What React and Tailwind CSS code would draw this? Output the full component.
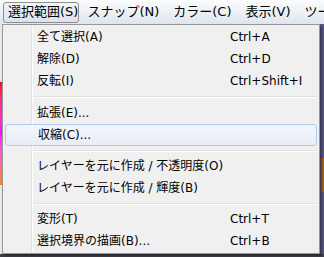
import React from 'react';

const font = { fontFamily: '"DejaVu Sans", "Noto Sans CJK JP", sans-serif' };

const menuBar = ['選択範囲(S)', 'スナップ(N)', 'カラー(C)', '表示(V)', 'ツール(T)'];

const items = [
  { label: '全て選択(A)', key: 'Ctrl+A' },
  { label: '解除(D)', key: 'Ctrl+D' },
  { label: '反転(I)', key: 'Ctrl+Shift+I' },
  { sep: 'h-[10px]' },
  { label: '拡張(E)...' },
  { label: '収縮(C)...', hover: true },
  { sep: 'h-[9px]' },
  { label: 'レイヤーを元に作成 / 不透明度(O)' },
  { label: 'レイヤーを元に作成 / 輝度(B)' },
  { sep: 'h-[9px]' },
  { label: '変形(T)', key: 'Ctrl+T' },
  { label: '選択境界の描画(B)...', key: 'Ctrl+B' },
];

export default function App() {
  return (
    <div className="relative w-[324px] h-[257px] overflow-hidden bg-[#55557f]" style={font}>
      {/* menu bar */}
      <div className="h-[24px] flex items-center pl-[3px] bg-gradient-to-b from-[#fbfcfd] to-[#dfe5ee] text-[13px] text-black">
        {menuBar.map((m, i) => (
          <div
            key={m}
            className={`h-[21px] flex items-center whitespace-nowrap ${
              i === 0
                ? 'w-[79px] pl-[4px] rounded-[3px] border border-[#8d8e90] bg-gradient-to-b from-[#f4f6f9] to-[#dde2ea]'
                : 'px-[6px] ml-[2px]'
            }`}
          >
            {m}
          </div>
        ))}
      </div>

      {/* background strips */}
      <div className="absolute left-0 top-[24px] w-[2px] h-[233px] bg-[#e8e8e8]" />
      <div className="absolute left-0 top-[82px] w-[2px] h-[103px] bg-gradient-to-b from-[#ff0000] via-[#ff00ff] to-[#ff8000]" />
      <div className="absolute left-0 top-[254px] w-[324px] h-[3px] bg-[#3f3f4a]" />
      <div className="absolute right-0 top-[158px] w-[3px] h-[34px] bg-[#b05a18]" />

      {/* dropdown */}
      <div className="absolute left-[2px] top-[24px] w-[318px] h-[230px] border border-[#979797] bg-[#f0f0f0] px-[2px] pt-[1px] pb-[1px] text-[12px] text-black shadow-[2px_2px_2px_rgba(0,0,0,0.35)]">
        <div className="relative flex flex-col">
          <div className="absolute left-[26px] top-0 bottom-0 w-[2px] border-l border-[#e2e3e3] bg-white" />
          {items.map((it, i) =>
            it.sep ? (
              <div key={i} className={`relative ${it.sep} flex items-center pl-[28px]`}>
                <div className="w-full h-[2px] border-t border-[#e0e0e0] bg-white" />
              </div>
            ) : (
              <div
                key={i}
                className={`relative h-[22px] flex items-center pl-[32px] whitespace-nowrap ${
                  it.hover
                    ? 'rounded-[3px] border border-[#aeccf1] bg-gradient-to-b from-[#f3f6fb] to-[#e6edf7] pl-[31px]'
                    : ''
                }`}
              >
                <span className="w-[193px]">{it.label}</span>
                {it.key && <span>{it.key}</span>}
              </div>
            )
          )}
        </div>
      </div>
    </div>
  );
}
